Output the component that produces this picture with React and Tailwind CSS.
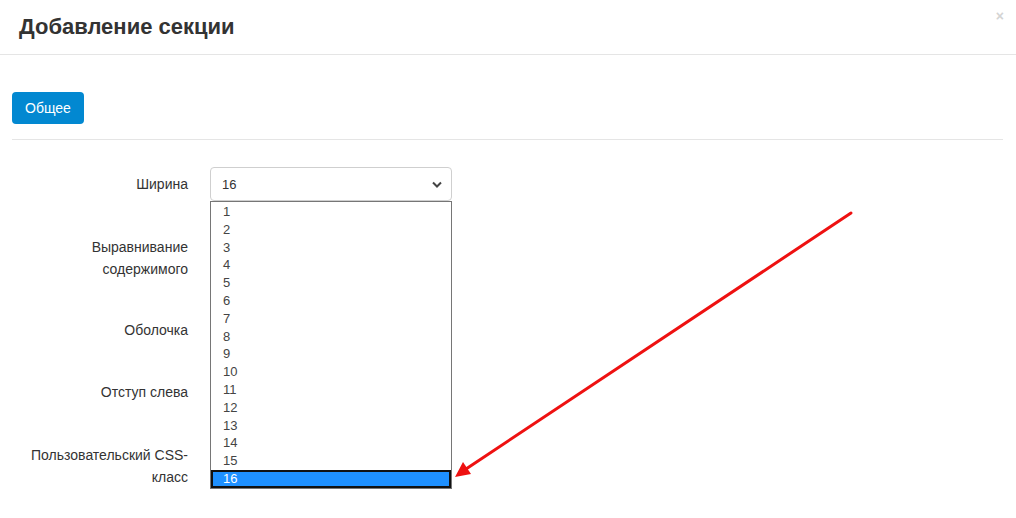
import React from "react";

const options = Array.from({ length: 16 }, (_, i) => i + 1);

function Label({ children, className = "" }) {
  return (
    <div className={"w-[176px] shrink-0 text-right text-[14px] leading-[22px] text-[#333] " + className}>
      {children}
    </div>
  );
}

export default function App() {
  return (
    <div
      className="relative w-[1016px] h-[518px] overflow-hidden bg-white"
      style={{ fontFamily: '"Liberation Sans", Arial, sans-serif' }}
    >
      {/* шапка */}
      <div className="relative h-[55px] border-b border-[#e5e5e5] px-[19px] flex items-center">
        <h2 className="text-[22px] font-bold text-[#333] pb-[1px]">Добавление секции</h2>
        <span className="absolute right-[12px] top-[6px] text-[14px] font-bold text-[#d4d4d4]">×</span>
      </div>

      <div className="pl-[12px] pr-[13px]">
        <div className="pt-[37px] pb-[15px] border-b border-[#e5e5e5]">
          <button className="h-[32px] px-[13px] rounded-[4px] bg-[#0288d1] text-white text-[14px]">
            Общее
          </button>
        </div>

        <div className="flex flex-col">
          <div className="flex items-center gap-[22px] mt-[27px]">
            <Label>Ширина</Label>
            <div className="relative w-[242px]">
              <div className="h-[34px] border border-[#cfcfcf] rounded-[4px] flex items-center justify-between pl-[11px] pr-[9px] text-[13px] text-[#333]">
                <span className="pt-[2px]">16</span>
                <svg width="10" height="7" viewBox="0 0 10 7">
                  <path d="M1 1.5 L5 5.5 L9 1.5" fill="none" stroke="#444" strokeWidth="2" />
                </svg>
              </div>
              {/* открытый список */}
              <div className="absolute left-0 top-[34px] z-10 w-[242px] border border-[#767676] bg-white pt-[1px]">
                {options.map((n) =>
                  n === 16 ? (
                    <div
                      key={n}
                      className="h-[18px] leading-[14px] pl-[10px] text-[13px] text-white bg-[#1e90ff] border-2 border-[#111]"
                    >
                      {n}
                    </div>
                  ) : (
                    <div key={n} className="h-[17.8px] leading-[17.8px] pl-[12px] text-[13px] text-[#444]">
                      {n}
                    </div>
                  )
                )}
              </div>
            </div>
          </div>

          <div className="flex gap-[22px] mt-[35px]">
            <Label>
              Выравнивание
              <br />
              содержимого
            </Label>
          </div>

          <div className="flex gap-[22px] mt-[39px]">
            <Label>Оболочка</Label>
          </div>

          <div className="flex gap-[22px] mt-[40px]">
            <Label>Отступ слева</Label>
          </div>

          <div className="flex gap-[22px] mt-[41px]">
            <Label>
              Пользовательский CSS-
              <br />
              класс
            </Label>
          </div>
        </div>
      </div>

      {/* стрелка */}
      <svg className="absolute left-0 top-0 pointer-events-none" width="1016" height="518">
        <line x1="851" y1="213" x2="466" y2="469" stroke="#ee1111" strokeWidth="3" strokeLinecap="round" />
        <polygon points="455,477 463,462 471,474" fill="#ee1111" />
      </svg>
    </div>
  );
}
